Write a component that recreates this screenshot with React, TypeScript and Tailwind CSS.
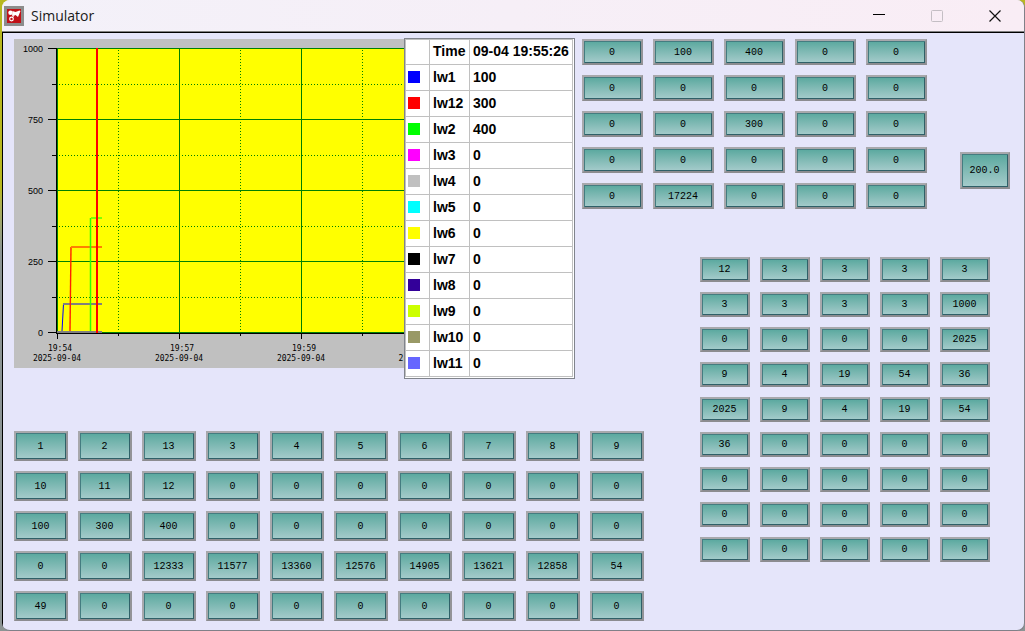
import clsx from 'clsx';

const topValues = [
  ['0', '100', '400', '0', '0'],
  ['0', '0', '0', '0', '0'],
  ['0', '0', '300', '0', '0'],
  ['0', '0', '0', '0', '0'],
  ['0', '17224', '0', '0', '0'],
];

const rightValues = [
  ['12', '3', '3', '3', '3'],
  ['3', '3', '3', '3', '1000'],
  ['0', '0', '0', '0', '2025'],
  ['9', '4', '19', '54', '36'],
  ['2025', '9', '4', '19', '54'],
  ['36', '0', '0', '0', '0'],
  ['0', '0', '0', '0', '0'],
  ['0', '0', '0', '0', '0'],
  ['0', '0', '0', '0', '0'],
];

const bottomValues = [
  ['1', '2', '13', '3', '4', '5', '6', '7', '8', '9'],
  ['10', '11', '12', '0', '0', '0', '0', '0', '0', '0'],
  ['100', '300', '400', '0', '0', '0', '0', '0', '0', '0'],
  ['0', '0', '12333', '11577', '13360', '12576', '14905', '13621', '12858', '54'],
  ['49', '0', '0', '0', '0', '0', '0', '0', '0', '0'],
];

const channels = [
  { name: 'lw1', value: 100, color: 'bg-[#0000ff]' },
  { name: 'lw12', value: 300, color: 'bg-[#ff0000]' },
  { name: 'lw2', value: 400, color: 'bg-[#00ff00]' },
  { name: 'lw3', value: 0, color: 'bg-[#ff00ff]' },
  { name: 'lw4', value: 0, color: 'bg-[#c0c0c0]' },
  { name: 'lw5', value: 0, color: 'bg-[#00ffff]' },
  { name: 'lw6', value: 0, color: 'bg-[#ffff00]' },
  { name: 'lw7', value: 0, color: 'bg-[#000000]' },
  { name: 'lw8', value: 0, color: 'bg-[#330099]' },
  { name: 'lw9', value: 0, color: 'bg-[#ccff00]' },
  { name: 'lw10', value: 0, color: 'bg-[#999966]' },
  { name: 'lw11', value: 0, color: 'bg-[#6666ff]' },
];

const yTicks = [1000, 750, 500, 250, 0];
const xTicks = ['19:54', '19:57', '19:59'];

function NumericCell({ value, className }: { value: string; className: string }) {
  return (
    <button
      type="button"
      className={clsx(
        'border-2 border-t-[#a8a8ac] border-l-[#a8a8ac] border-r-[#949498] border-b-[#8c8c90]',
        'bg-linear-to-b from-[#58a89e] to-[#a6cccc]',
        'shadow-[inset_1px_1px_0_#447c80,inset_-1px_-1px_0_#2f6068]',
        'pt-px pr-px font-["Liberation_Mono",monospace] text-[10px] leading-3 text-black',
        className,
      )}
    >
      {value}
    </button>
  );
}

function CellGrid({ rows, cols, cell }: { rows: string[][]; cols: string; cell: string }) {
  return (
    <div className={clsx('grid w-max gap-2.5', cols)}>
      {rows.flat().map((value, i) => (
        <NumericCell key={i} value={value} className={cell} />
      ))}
    </div>
  );
}

function TrendChart() {
  return (
    <svg width="561" height="329" viewBox="0 0 561 329" className="block bg-[#c0c0c0]" shapeRendering="crispEdges">
      <rect x="43" y="9" width="504" height="285" fill="#ffff00" />

      {/* minor grid */}
      <g stroke="#008000" strokeWidth="1" strokeDasharray="1 2">
        {[45.5, 116.5, 187.5, 258.5].map((y) => (
          <line key={y} x1="45" x2="547" y1={y} y2={y} />
        ))}
        {[104.5, 226.5, 348.5, 470.5].map((x) => (
          <line key={x} x1={x} x2={x} y1="11" y2="293" />
        ))}
      </g>

      {/* major grid */}
      <g stroke="#008000" strokeWidth="1">
        {[9.5, 80.5, 151.5, 222.5, 293.5].map((y) => (
          <line key={y} x1="43" x2="547" y1={y} y2={y} />
        ))}
        {[43.5, 165.5, 287.5, 409.5].map((x) => (
          <line key={x} x1={x} x2={x} y1="9" y2="294" />
        ))}
      </g>

      {/* axes */}
      <g stroke="#000" strokeWidth="1">
        <line x1="42.5" x2="42.5" y1="9" y2="295" />
        <line x1="42" x2="547" y1="294.5" y2="294.5" />
        {yTicks.map((t, i) => (
          <line key={t} x1="34" x2="43" y1={9.5 + i * 71} y2={9.5 + i * 71} />
        ))}
        {[45.5, 116.5, 187.5, 258.5].map((y) => (
          <line key={y} x1="38" x2="43" y1={y} y2={y} />
        ))}
        {xTicks.map((t, i) => (
          <line key={t} x1={43.5 + i * 122} x2={43.5 + i * 122} y1="295" y2="300" />
        ))}
        {[104.5, 226.5, 348.5].map((x) => (
          <line key={x} x1={x} x2={x} y1="295" y2="297" />
        ))}
      </g>

      {/* traces */}
      <g fill="none" strokeWidth="1" shapeRendering="auto">
        <path d="M43 293H88" stroke="#808080" strokeWidth="2" />
        <path d="M48 292L49.5 265" stroke="#0000ff" />
        <path d="M49 265H88" stroke="#808080" strokeWidth="2" />
        <path d="M56 292L57 208" stroke="#ff2000" strokeWidth="1.4" />
        <path d="M57 208H88" stroke="#ff8000" strokeWidth="2" />
        <path d="M76.5 292V179" stroke="#30ff00" strokeWidth="1.5" />
        <path d="M77 179H88" stroke="#80ff00" strokeWidth="2" />
      </g>
      <rect x="82" y="9" width="2" height="285" fill="#ff0000" />

      <g fontSize="9" fill="#000" fontFamily="Liberation Sans, sans-serif">
        {yTicks.map((t, i) => (
          <text key={t} x="29" y={13 + i * 71} textAnchor="end">{t}</text>
        ))}
      </g>
      <g fontSize="8" fill="#000" fontFamily="DejaVu Sans Mono, monospace" textAnchor="middle">
        {xTicks.map((t, i) => (
          <g key={t}>
            <text x={46 + i * 122} y="312">{t}</text>
            <text x={43 + i * 122} y="322">2025-09-04</text>
          </g>
        ))}
        {/* the next date is cut off by the legend */}
        <text x="387" y="322">2</text>
      </g>
    </svg>
  );
}

function Legend() {
  return (
    <div className="absolute -top-px right-0 border border-[#80848c] bg-white pr-px pb-px">
      <table className="table-fixed border-collapse text-left font-['Liberation_Sans',sans-serif] text-sm leading-5 font-bold text-black">
        <thead>
          <tr className="h-[25px]">
            <th className="w-6 border border-[#c0c0c0]" />
            <th className="w-10 border border-[#c0c0c0] pb-0.5 pl-[3px]">Time</th>
            <th className="w-[103px] border border-[#c0c0c0] pb-0.5 pl-[3px] whitespace-nowrap">09-04 19:55:26</th>
          </tr>
        </thead>
        <tbody>
          {channels.map((c) => (
            <tr key={c.name} className="h-[26px]">
              <td className="border border-[#c0c0c0] pb-0.5 pl-0.5">
                <div className={clsx('size-3', c.color)} />
              </td>
              <td className="border border-[#c0c0c0] pb-0.5 pl-[3px]">{c.name}</td>
              <td className="border border-[#c0c0c0] pb-0.5 pl-[3px]">{c.value}</td>
            </tr>
          ))}
        </tbody>
      </table>
    </div>
  );
}

function TitleBar() {
  return (
    <header className="flex h-8 items-center border-b border-[#808080] bg-linear-to-r from-[#f3f1f9] to-[#f9edf5] pl-0.5 font-['Open_Sans',sans-serif]">
      <svg width="20" height="20" viewBox="0 0 20 20" className="mr-[7px]">
        <rect width="20" height="20" fill="#8c8c8c" />
        <rect x="3" y="3" width="14" height="14" fill="#c01018" />
        <circle cx="6.5" cy="6.8" r="2.2" fill="#fff" />
        <path d="M8.500 5l3 1 4-1.500 1 .5-2.500 6-2.500-2-3.500 1z" fill="#fff" />
        <circle cx="7.500" cy="13" r="1.800" fill="none" stroke="#fff" strokeWidth="1.200" />
        <path d="M8.500 11.500l2-3" stroke="#fff" />
      </svg>
      <h1 className="text-sm leading-5 text-[#1a1a1a]">Simulator</h1>
      <div className="ml-auto flex">
        <button type="button" aria-label="Minimize" className="flex w-[58px] justify-center">
          <svg width="12" height="12" viewBox="0 0 12 12" stroke="#000"><path d="M0 4.500H12" /></svg>
        </button>
        <button type="button" aria-label="Maximize" disabled className="flex w-[58px] justify-center">
          <svg width="12" height="12" viewBox="0 0 12 12" fill="none" stroke="#c4bec4"><rect x=".5" y=".5" width="11" height="11" rx="1" /></svg>
        </button>
        <button type="button" aria-label="Close" className="flex w-[58px] justify-center">
          <svg width="12" height="12" viewBox="0 0 12 12" stroke="#111" strokeWidth="1.200"><path d="M.5.5l11 11M11.500.5l-11 11" /></svg>
        </button>
      </div>
    </header>
  );
}

export default function App() {
  return (
    <div className="flex min-h-screen bg-linear-to-b from-[#b8b820] from-30% to-[#8c9494] to-40% pl-0.5">
      <div className="flex flex-1 flex-col overflow-hidden rounded-lg border-r border-b border-[#808088] bg-[#e5e5fa]">
        <TitleBar />
        <main className="grid flex-1 grid-cols-[568px_118px_auto] grid-rows-[218px_174px_auto] justify-start border-t border-l border-black pt-1.5 pl-[11px]">
          <div className="relative row-span-2 h-max w-max">
            <TrendChart />
            <Legend />
          </div>

          <div className="col-span-2 flex items-start justify-between">
            <CellGrid rows={topValues} cols="grid-cols-5" cell="h-[26px] w-[61px]" />
            <div className="pt-[113px] pl-[33px]">
              <NumericCell value="200.0" className="h-[37px] w-[50px]" />
            </div>
          </div>

          <div className="col-start-3 row-span-2">
            <CellGrid rows={rightValues} cols="grid-cols-5" cell="h-[25px] w-[50px]" />
          </div>

          <div className="col-span-2 col-start-1 row-start-3">
            <CellGrid rows={bottomValues} cols="grid-cols-10" cell="h-[30px] w-[54px]" />
          </div>
        </main>
      </div>
    </div>
  );
}
